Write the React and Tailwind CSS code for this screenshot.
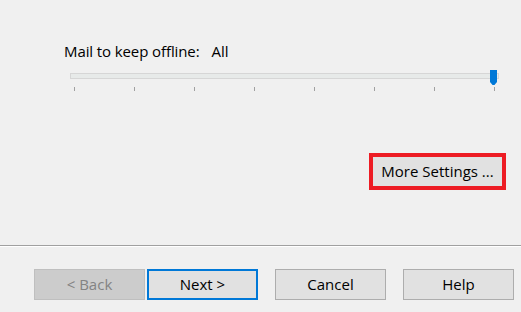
import React from 'react'

const font = { fontFamily: '"Open Sans", "Noto Sans", sans-serif' }

export default function App() {
  const ticks = [0, 1, 2, 3, 4, 5, 6, 7]

  return (
    <div className="w-[521px] h-[312px] bg-[#f0f0f0] flex flex-col overflow-hidden text-black" style={font}>
      {/* Offline slider */}
      <div className="pl-[64px] pt-[41px] flex items-center gap-[12px] text-[15px] leading-[20px]">
        <span className="tracking-[-0.1px]">Mail to keep offline:</span>
        <span>All</span>
      </div>
      <div className="ml-[70px] w-[429px] mt-[12px]">
        <div className="relative h-[6px] bg-[#e7eae9] border border-[#d6d6d6]">
          <div className="absolute right-[1px] top-[-4px] w-[7px] h-[15px]">
            <svg width="7" height="15" viewBox="0 0 7 15">
              <path d="M0 0H7V12L4.5 15H2.5L0 12Z" fill="#0078d7" />
            </svg>
          </div>
        </div>
        <div className="ml-[4px] w-[421px] mt-[8px] flex justify-between">
          {ticks.map(i => (
            <div key={i} className="w-px h-[4px] bg-[#a0a0a0]" />
          ))}
        </div>
      </div>

      {/* More settings */}
      <div className="flex justify-end pr-[15px] mt-[62px]">
        <div className="w-[137px] h-[37px] border-[4px] border-[#ed1c24] bg-[#e1e1e1] flex items-center justify-center text-[15px]">
          More Settings ...
        </div>
      </div>

      {/* Separator */}
      <div className="mt-[55px] h-px bg-[#a0a0a0]" />
      <div className="h-px bg-white" />

      {/* Wizard buttons */}
      <div className="mt-[22px] flex pl-[34px] text-[15px]">
        <div className="w-[111px] h-[31px] bg-[#cccccc] border border-[#bfbfbf] text-[#838383] flex items-center justify-center">
          &lt; Back
        </div>
        <div className="ml-[2px] w-[111px] h-[31px] bg-[#e1e1e1] border-2 border-[#0078d7] flex items-center justify-center">
          Next &gt;
        </div>
        <div className="ml-[17px] w-[111px] h-[31px] bg-[#e1e1e1] border border-[#adadad] flex items-center justify-center">
          Cancel
        </div>
        <div className="ml-[17px] w-[111px] h-[31px] bg-[#e1e1e1] border border-[#adadad] flex items-center justify-center">
          Help
        </div>
      </div>
    </div>
  )
}
